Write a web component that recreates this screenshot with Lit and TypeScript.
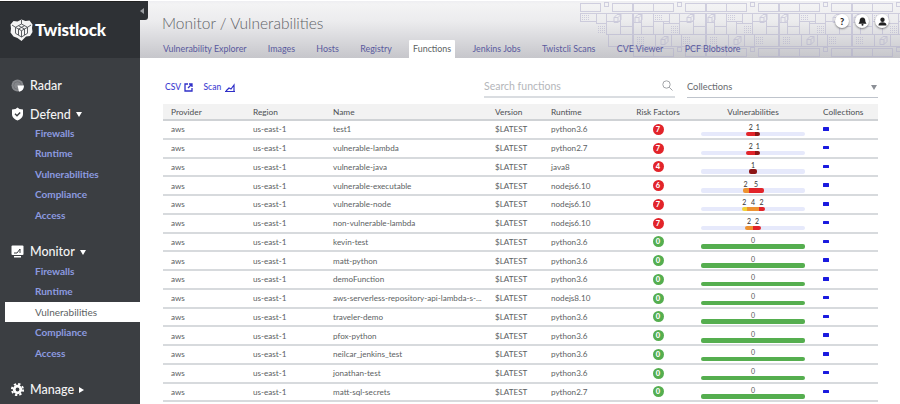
import { LitElement, html, css, svg } from "lit";
import { customElement } from "lit/decorators.js";

type Row = [string, string, string, number, number[]];
const rows: Row[] = [
  ["test1", "python3.6", "$LATEST", 7, [0, 0, 2, 1]],
  ["vulnerable-lambda", "python2.7", "$LATEST", 7, [0, 0, 2, 1]],
  ["vulnerable-java", "java8", "$LATEST", 4, [0, 0, 0, 1]],
  ["vulnerable-executable", "nodejs6.10", "$LATEST", 6, [0, 2, 5, 0]],
  ["vulnerable-node", "nodejs6.10", "$LATEST", 7, [2, 4, 2, 0]],
  ["non-vulnerable-lambda", "nodejs6.10", "$LATEST", 7, [0, 2, 2, 0]],
  ["kevin-test", "python3.6", "$LATEST", 0, []],
  ["matt-python", "python3.6", "$LATEST", 0, []],
  ["demoFunction", "python3.6", "$LATEST", 0, []],
  ["aws-serverless-repository-api-lambda-s-...", "nodejs8.10", "$LATEST", 0, []],
  ["traveler-demo", "python3.6", "$LATEST", 0, []],
  ["pfox-python", "python3.6", "$LATEST", 0, []],
  ["neilcar_jenkins_test", "python3.6", "$LATEST", 0, []],
  ["jonathan-test", "python3.6", "$LATEST", 0, []],
  ["matt-sql-secrets", "python2.7", "$LATEST", 0, []],
];

const tabs = ["Vulnerability Explorer", "Images", "Hosts", "Registry", "Functions", "Jenkins Jobs", "Twistcli Scans", "CVE Viewer", "PCF Blobstore"];
const barColors = ["#f2d235", "#ee9231", "#e2242a", "#8c1515"];

const tile: number[][] = [
  [0, 2, 20, 8], [20, 2, 20, 8], [44, 1, 4, 4], [52, 2, 20, 8],
  [0, 12, 8, 9], [8, 12, 12, 13], [20, 12, 16, 8], [36, 12, 10, 10], [46, 12, 14, 8], [60, 12, 12, 13],
  [0, 21, 8, 12], [8, 25, 12, 8], [20, 20, 10, 13], [30, 22, 16, 11], [46, 20, 14, 13], [60, 25, 12, 8],
  [0, 33, 22, 12], [22, 33, 16, 12], [38, 33, 10, 12], [48, 33, 24, 12],
];
const hatch: number[][] = [[22, 13], [38, 24], [50, 35], [4, 35]];
const cubes: number[][] = [[2, 13], [54, 13], [28, 35]];

function circuit() {
  const out = [];
  const inside = (x: number, y: number) => x >= 420 + y * 1.45;
  for (let ty = 0; ty < 2; ty++) {
    for (let tx = 0; tx < 5; tx++) {
      const ox = 420 + tx * 73;
      const oy = ty * 45;
      for (const [x, y, w, h] of tile) {
        if (inside(ox + x, oy + y)) out.push(svg`<rect x=${ox + x + 0.5} y=${oy + y + 0.5} width=${w} height=${h}></rect>`);
      }
      for (const [x, y] of hatch) {
        if (inside(ox + x, oy + y)) out.push(svg`<path stroke-dasharray="1 1" d="M${ox + x} ${oy + y + 1.500}h8M${ox + x} ${oy + y + 3.500}h8M${ox + x} ${oy + y + 5.500}h8M${ox + x} ${oy + y + 7.500}h8"></path>`);
      }
      for (const [x, y] of cubes) {
        if (inside(ox + x, oy + y)) out.push(svg`<path d="M${ox + x} ${oy + y + 3.500}l3-3h4v5l-3 3h-4zM${ox + x} ${oy + y + 3.500}h4l3-3M${ox + x + 4} ${oy + y + 3.500}v5"></path>`);
      }
    }
  }
  return out;
}

@customElement("app-root")
export class AppRoot extends LitElement {
  static styles = css`
    :host { display: block; width: 900px; height: 404px; overflow: hidden; font-family: "Lato", "Liberation Sans", sans-serif; color: #5c5f63; }
    .page { display: flex; height: 404px; background: #fff; padding-top: 1px; box-sizing: border-box; position: relative; }
    .side { width: 140px; flex: none; background: #3b3e42; color: #fff; display: flex; flex-direction: column; border-top: 1px solid #222; position: relative; }
    .side > * { flex-shrink: 0; }
    .logo { height: 56px; background: #2e3135; display: flex; align-items: center; padding-left: 10px; gap: 2px; font-size: 17px; font-weight: 900; letter-spacing: -0.2px; box-sizing: border-box; padding-bottom: 1px; }
    .collapse { position: absolute; left: 140px; top: -1px; width: 8px; height: 19px; background: #2e3135; border-radius: 0 0 3px 0; display: flex; align-items: center; z-index: 2; }
    .collapse i { border: 3.5px solid transparent; border-right: 4px solid #9a9da1; border-left: 0; }
    .sec { display: flex; align-items: center; height: 20px; padding-left: 11px; gap: 6px; font-size: 12.5px; font-weight: 500; color: #f4f4f4; }
    .sec svg { flex: none; }
    .tri-d { width: 0; height: 0; border: 3.5px solid transparent; border-top: 5px solid #fff; border-bottom: 0; margin-left: -1px; margin-top: 1px; }
    .tri-r { width: 0; height: 0; border: 3.5px solid transparent; border-left: 5px solid #fff; border-right: 0; margin-left: -1px; margin-top: 1px; }
    .sub { display: block; height: 20.4px; line-height: 20.4px; padding-left: 35px; font-size: 10px; font-weight: 700; color: #8d9be0; }
    .sub.on { background: #fff; color: #5c5f63; font-weight: 400; margin-left: 5px; padding-left: 30px; }
    .radar { margin-top: 17px; }
    .defend { margin-top: 9px; margin-bottom: -1px; }
    .monitor { margin-top: 17px; margin-bottom: -1px; }
    .manage { margin-top: 17px; }
    .main { flex: 1; min-width: 0; display: flex; flex-direction: column; }
    .head { height: 57px; flex: none; position: relative; background: linear-gradient(#eeeef2 0, #f3f3f4 6%, #ececee 35%, #c6c6cb 100%); overflow: hidden; }
    .pattern { position: absolute; left: 0; top: 0; fill: none; stroke: #aeaccb; stroke-width: 1; opacity: .5; }
    .title { position: absolute; left: 22px; top: 13px; font-size: 15.5px; font-weight: 300; color: #5f6267; }
    .tabs { position: absolute; left: 19px; bottom: 0; display: flex; height: 18px; align-items: stretch; }
    .tab { padding: 0 4px; margin-right: 13.3px; font-size: 8.9px; line-height: 18px; color: #5a5a9e; white-space: nowrap; }
    .tab.on { background: #fff; color: #5c5f63; border-radius: 1px 1px 0 0; }
    .icons { position: absolute; right: 11px; top: 13px; display: flex; gap: 6px; }
    .ib { width: 14px; height: 14px; border-radius: 50%; background: #fff; box-shadow: 0 1px 2px rgba(0,0,0,.45); display: flex; align-items: center; justify-content: center; font-size: 9px; font-weight: 900; color: #222; }
    .content { padding: 0 22px 0 23px; }
    .tools { display: flex; align-items: center; height: 46px; box-sizing: border-box; padding-top: 12px; }
    .act { display: flex; align-items: center; gap: 3.5px; font-size: 8.5px; color: #3e3ed2; margin-right: 10px; font-weight: 500; }
    .act:first-child { margin-left: 2px; }
    .search { margin-left: auto; width: 191px; height: 22px; border-bottom: 2px solid #dadde1; display: flex; align-items: center; justify-content: space-between; font-size: 10.5px; color: #b4b6ba; box-sizing: border-box; margin-top: -1px; }
    .coll { margin-left: 12px; width: 191px; height: 22px; border-bottom: 1px solid #bfc4cc; display: flex; align-items: center; justify-content: space-between; font-size: 9.3px; color: #66696d; box-sizing: border-box; margin-top: -1px; }
    .search svg { margin-right: 2px; }
    .coll i { border: 3.5px solid transparent; border-top: 5px solid #8b8f96; border-bottom: 0; margin-right: 1px; margin-top: 2px; }
    .tbl { width: 715px; font-size: 8.1px; }
    .row { display: grid; grid-template-columns: 82px 80px 162px 56px 78px 74px 116px 1fr; height: 18.75px; align-items: center; border-bottom: 2px solid #d7dadd; box-sizing: border-box; }
    .row.h { background: #f2f2f2; height: 17px; font-size: 8.3px; color: #4c4f53; border-bottom: 2px solid #cfd2d5; }
    .row > span { white-space: nowrap; padding-left: 8px; }
    .row > span.ctr { text-align: center; padding: 0; }
    .row > span.coln { padding-left: 12px; }
    .badge { width: 11px; height: 11px; border-radius: 50%; margin: 0 auto; color: #fff; font-size: 7.5px; font-weight: 900; line-height: 11px; text-align: center; }
    .vul { display: flex; flex-direction: column; align-items: center; height: 100%; justify-content: flex-end; padding-bottom: 1.5px; box-sizing: border-box; }
    .nums { display: flex; justify-content: center; font-size: 7px; line-height: 7px; color: #333; margin-bottom: .5px; }
    .nums span { text-align: center; }
    .track { width: 104px; height: 4.5px; border-radius: 2px; background: #e6e9fb; display: flex; justify-content: center; }
    .track span { height: 4.5px; }
    .track span:first-child { border-radius: 2px 0 0 2px; }
    .track span:last-child { border-radius: 0 2px 2px 0; }
    .track span:only-child { border-radius: 2px; }
    .track.ok { background: #55ae4f; }
    .zero { color: #555; }
    .flag { width: 6px; height: 3.5px; background: #1a1adf; display: block; margin-top: -1px; border-radius: .5px; }
  `;

  private bar(v: number[]) {
    const total = v.reduce((a, b) => a + b, 0);
    if (!total) return html`<div class="vul"><div class="nums zero">0</div><div class="track ok"></div></div>`;
    const w = total === 1 ? 8 : total === 3 ? 14 : total === 7 ? 21 : total === 8 ? 23 : 16;
    const cells = v.map((n, i) => ({ n, i })).filter((x) => x.n);
    const width = (n: number) => (n / total) * w;
    return html`<div class="vul">
      <div class="nums">${cells.map((c) => html`<span style="width:${width(c.n)}px">${c.n}</span>`)}</div>
      <div class="track">${cells.map((c) => html`<span style="width:${width(c.n)}px;background:${barColors[c.i]}"></span>`)}</div>
    </div>`;
  }

  render() {
    return html`<div class="page">
      <aside class="side">
        <div class="collapse"><i></i></div>
        <div class="logo">
          <svg width="23" height="22" viewBox="0 0 23 22">
            <path d="M11.500 .5l4 1.500 4-.5 3 4-.5 3.500.5 4-2.500 4-4 .5-4.500 4.500-4-3-4-1.500-3-4 .5-4-.5-4 3-3.500 4 .5z" fill="#f4f4f4"/>
            <path d="M11.500 5l6 3.300v6L11.500 18l-6-3.700v-6zM5.500 8.300l6 3.400 6-3.400M11.500 11.700V18M8.500 6.700l6 3.300v6M14.500 6.700l-6 3.300v6M2 6l3.500 2.300M21 6l-3.500 2.300M11.500 1v4" fill="none" stroke="#4b4e52" stroke-width=".9"/>
          </svg>
          <span>Twistlock</span>
        </div>
        <div class="sec radar">
          <svg width="13" height="13" viewBox="0 0 13 13"><circle cx="6.500" cy="6.500" r="6" fill="#85878b"/><circle cx="6.500" cy="6.500" r="3.800" fill="none" stroke="#6a6c70" stroke-width=".7"/><path d="M6.500 6.500L13 6.500A6.500 6.500 0 0 1 8 12.800z" fill="#fff"/></svg>
          <span>Radar</span>
        </div>
        <div class="sec defend">
          <svg width="13" height="14" viewBox="0 0 13 14"><path d="M6.500 .5L8.500 2l3.500.5V7c0 3.300-2.500 5.500-5.500 6.500C3.500 12.500 1 10.300 1 7V2.500L4.500 2z" fill="#fff"/><path d="M4 6.800l2 2 3.200-3.300" stroke="#3b3e42" stroke-width="1.400" fill="none"/></svg>
          <span>Defend</span><i class="tri-d"></i>
        </div>
        <span class="sub">Firewalls</span><span class="sub">Runtime</span><span class="sub">Vulnerabilities</span><span class="sub">Compliance</span><span class="sub">Access</span>
        <div class="sec monitor">
          <svg width="13" height="13" viewBox="0 0 13 13"><rect x=".5" y=".5" width="12" height="9.500" rx="1" fill="#fff"/><path d="M3 8h3l3-4v4" stroke="#3b3e42" fill="none"/><rect x="3" y="11" width="7" height="1.500" fill="#fff"/></svg>
          <span>Monitor</span><i class="tri-d"></i>
        </div>
        <span class="sub">Firewalls</span><span class="sub">Runtime</span><span class="sub on">Vulnerabilities</span><span class="sub">Compliance</span><span class="sub">Access</span>
        <div class="sec manage">
          <svg width="13" height="13" viewBox="0 0 13 13"><circle cx="6.500" cy="6.500" r="3.300" fill="none" stroke="#fff" stroke-width="2.800"/><circle cx="6.500" cy="6.500" r="5.600" fill="none" stroke="#fff" stroke-width="1.900" stroke-dasharray="2.300 2.100"/></svg>
          <span>Manage</span><i class="tri-r"></i>
        </div>
      </aside>
      <main class="main">
        <header class="head">
          <svg class="pattern" width="760" height="57">${circuit()}</svg>
          <div class="title">Monitor / Vulnerabilities</div>
          <nav class="tabs">${tabs.map((t) => html`<span class="tab ${t === "Functions" ? "on" : ""}">${t}</span>`)}</nav>
          <div class="icons">
            <div class="ib">?</div>
            <div class="ib"><svg width="9" height="9" viewBox="0 0 9 9"><path d="M4.500 .5c2 0 2.800 1.500 2.800 3.200 0 1.500 1 2.300 1.200 3H.5c.2-.7 1.200-1.500 1.200-3C1.700 2 2.500 .5 4.500 .5z" fill="#222"/><circle cx="4.500" cy="7.800" r="1" fill="#222"/></svg></div>
            <div class="ib"><svg width="9" height="9" viewBox="0 0 9 9"><circle cx="4.500" cy="2.700" r="2.200" fill="#222"/><path d="M.5 8.500c0-2.500 1.500-3.300 4-3.300s4 .8 4 3.300z" fill="#222"/></svg></div>
          </div>
        </header>
        <section class="content">
          <div class="tools">
            <span class="act">CSV <svg width="9" height="9" viewBox="0 0 9 9" fill="none" stroke="#2f2fc8" stroke-width="1.300"><path d="M4 1H1v7h7V5M5 1h3v3M8 1L4 5"/></svg></span>
            <span class="act">Scan <svg width="10" height="9" viewBox="0 0 10 9" fill="none" stroke="#2f2fc8" stroke-width="1.200"><path d="M0 8.500h10M1 8l3-3 2 1 3-4v6"/></svg></span>
            <div class="search"><span>Search functions</span><svg width="11" height="11" viewBox="0 0 11 11" fill="none" stroke="#a3a5a9"><circle cx="4.500" cy="4.500" r="3.700"/><path d="M7.200 7.200l3.300 3.300"/></svg></div>
            <div class="coll"><span>Collections</span><i></i></div>
          </div>
          <div class="tbl">
            <div class="row h"><span>Provider</span><span>Region</span><span>Name</span><span>Version</span><span>Runtime</span><span class="ctr">Risk Factors</span><span class="ctr">Vulnerabilities</span><span class="coln">Collections</span></div>
            ${rows.map((r) => html`<div class="row">
              <span>aws</span><span>us-east-1</span><span>${r[0]}</span><span>${r[2]}</span><span>${r[1]}</span>
              <span class="ctr"><div class="badge" style="background:${r[3] ? "#e2242a" : "#55ae4f"}">${r[3]}</div></span>
              ${this.bar(r[4])}
              <span class="coln"><i class="flag"></i></span>
            </div>`)}
          </div>
        </section>
      </main>
    </div>`;
  }
}
